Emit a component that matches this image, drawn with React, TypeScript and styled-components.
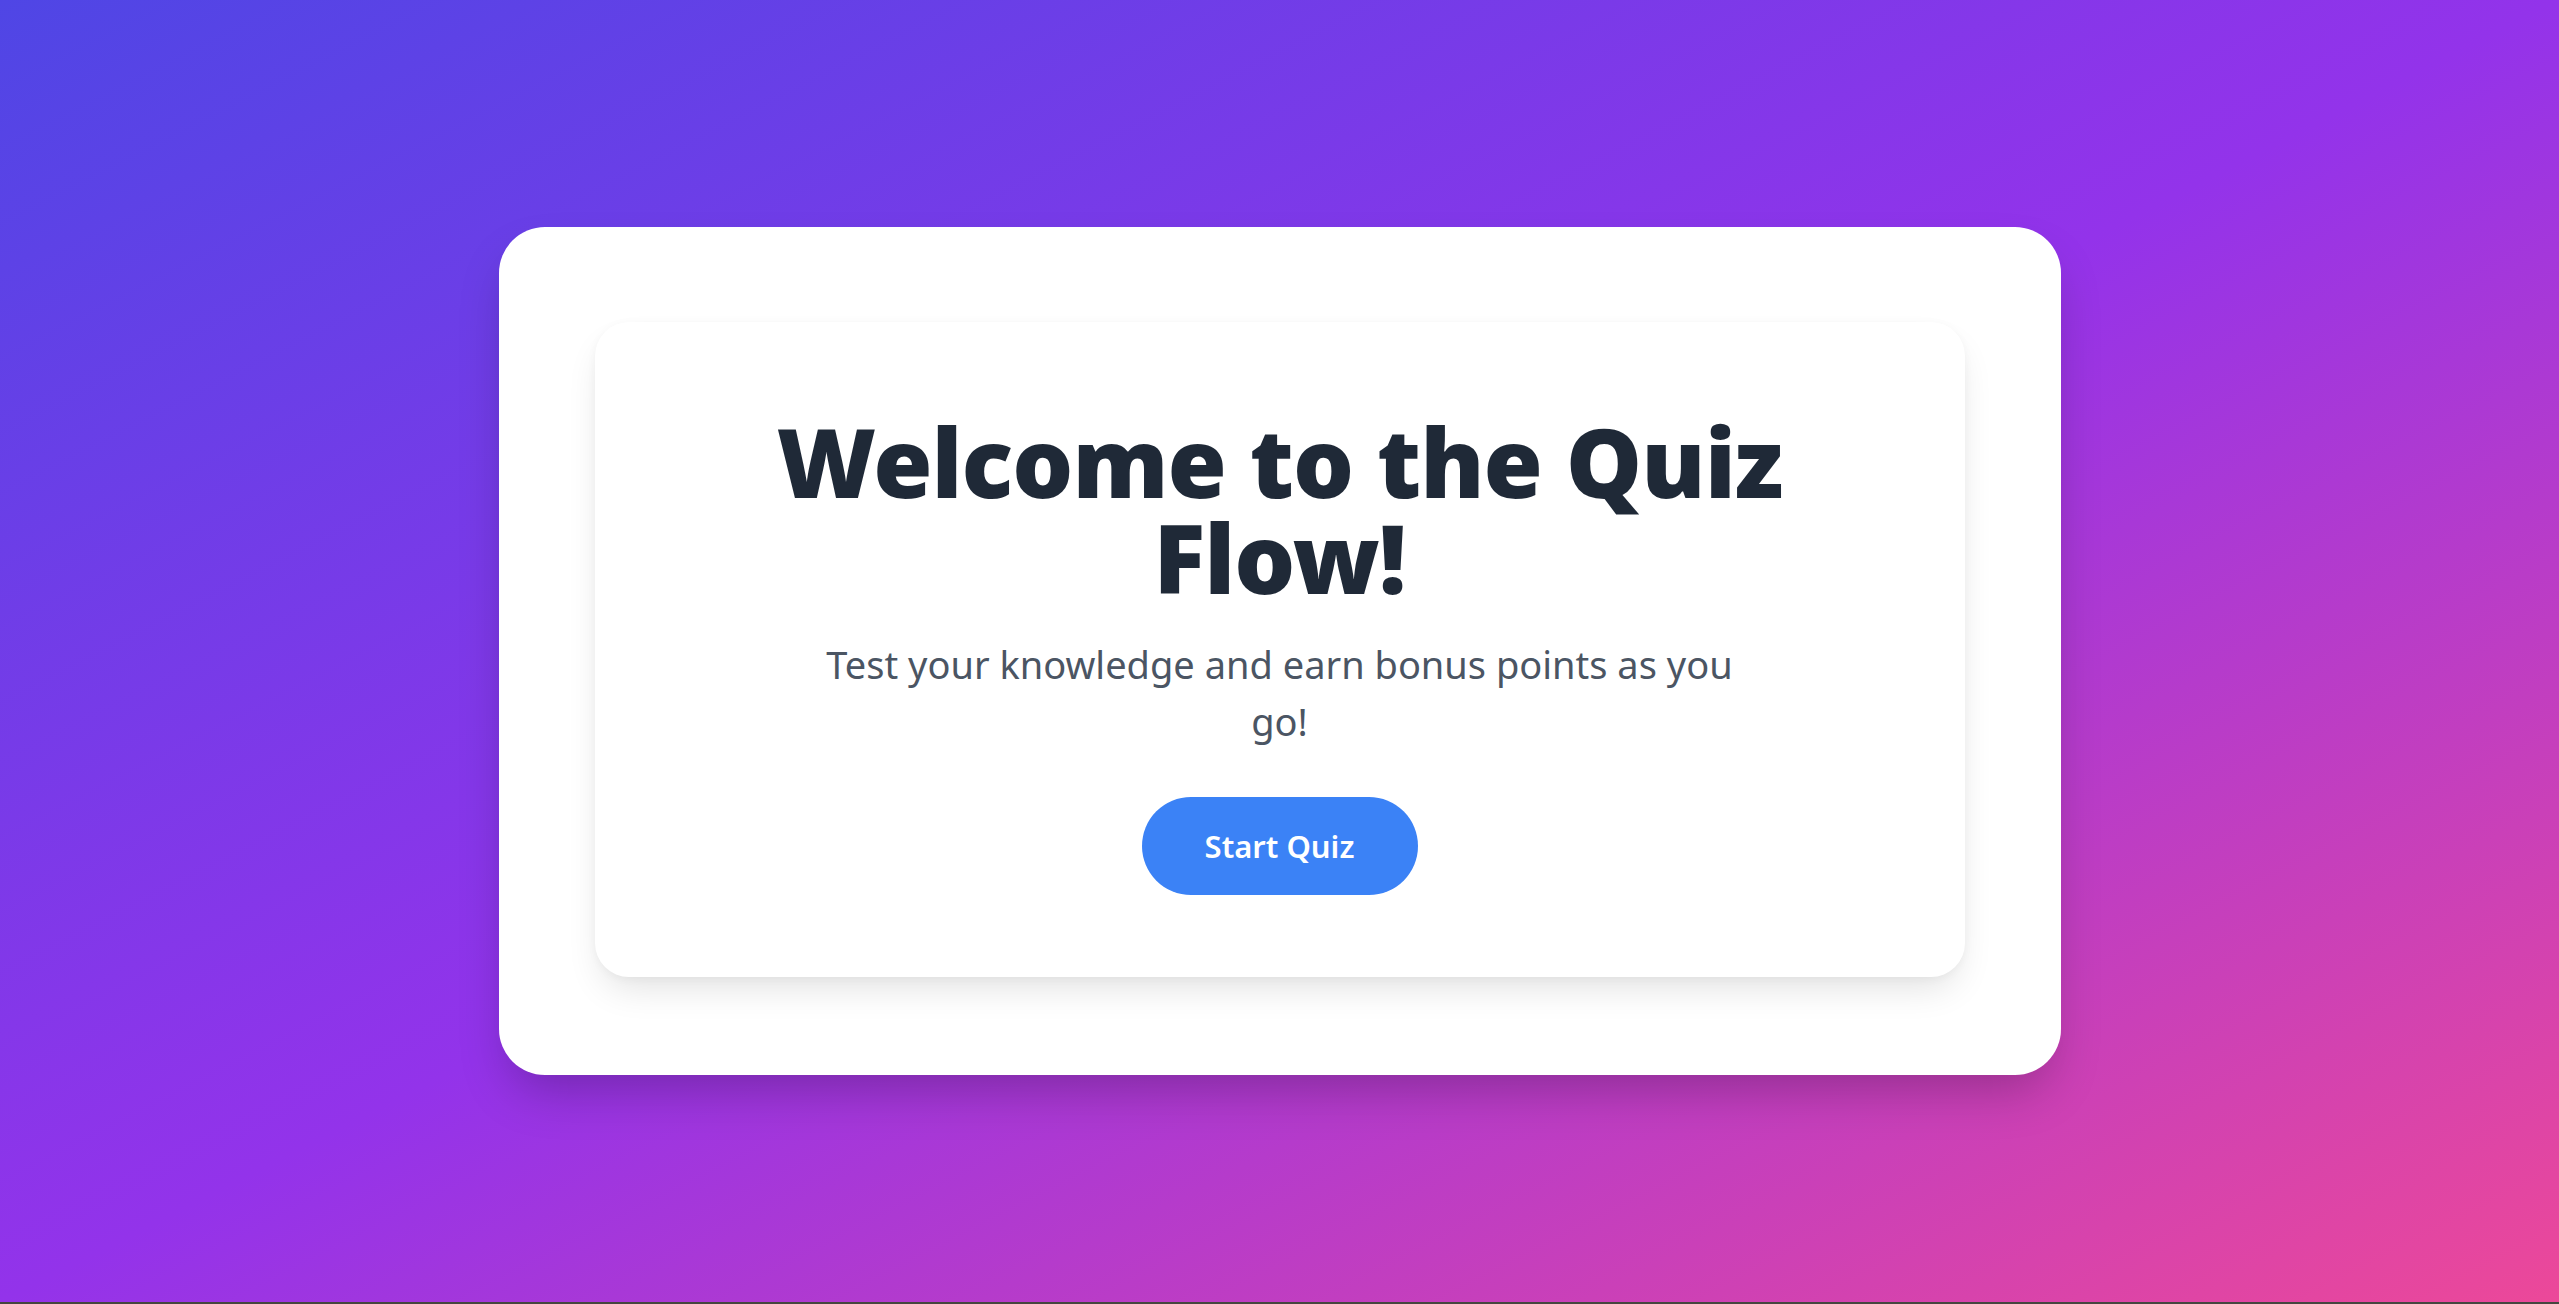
import React from "react";
import styled, { createGlobalStyle } from "styled-components";

const GlobalStyle = createGlobalStyle`
  html, body {
    margin: 0;
    padding: 0;
    background: #45463f;
  }
  * {
    box-sizing: border-box;
  }
`;

const Page = styled.div`
  min-height: calc(100vh - 2px);
  display: flex;
  align-items: center;
  justify-content: center;
  background: linear-gradient(to bottom right, #4f46e5, #9333ea 50%, #ec4899);
  font-family: "Noto Sans", "Open Sans", sans-serif;
`;

const Shell = styled.div`
  width: 1562px;
  padding: 95px 96px 98px;
  background: #ffffff;
  border-radius: 46px;
  box-shadow: 0 25px 50px -12px rgba(0, 0, 0, 0.25);
`;

const Card = styled.div`
  display: flex;
  flex-direction: column;
  align-items: center;
  padding: 91px 80px 82px;
  background: #ffffff;
  border-radius: 34px;
  box-shadow: 0 18px 36px -8px rgba(0, 0, 0, 0.12), 0 2px 10px rgba(0, 0, 0, 0.04);
  text-align: center;
`;

const Title = styled.h1`
  margin: 0 0 31px;
  max-width: 1100px;
  font-size: 96px;
  line-height: 96px;
  font-weight: 900;
  letter-spacing: -1px;
  color: #1f2937;
`;

const Subtitle = styled.p`
  margin: 0 0 47px;
  max-width: 950px;
  font-size: 38px;
  line-height: 57px;
  font-weight: 400;
  color: #4b5563;
`;

const StartButton = styled.button`
  width: 276px;
  height: 98px;
  border: none;
  border-radius: 999px;
  background: #3b82f6;
  color: #ffffff;
  font-family: inherit;
  font-size: 31px;
  font-weight: 600;
  cursor: pointer;
`;

export default function App() {
  return (
    <>
      <GlobalStyle />
      <Page>
        <Shell>
          <Card>
            <Title>Welcome to the Quiz Flow!</Title>
            <Subtitle>Test your knowledge and earn bonus points as you go!</Subtitle>
            <StartButton>Start Quiz</StartButton>
          </Card>
        </Shell>
      </Page>
    </>
  );
}
